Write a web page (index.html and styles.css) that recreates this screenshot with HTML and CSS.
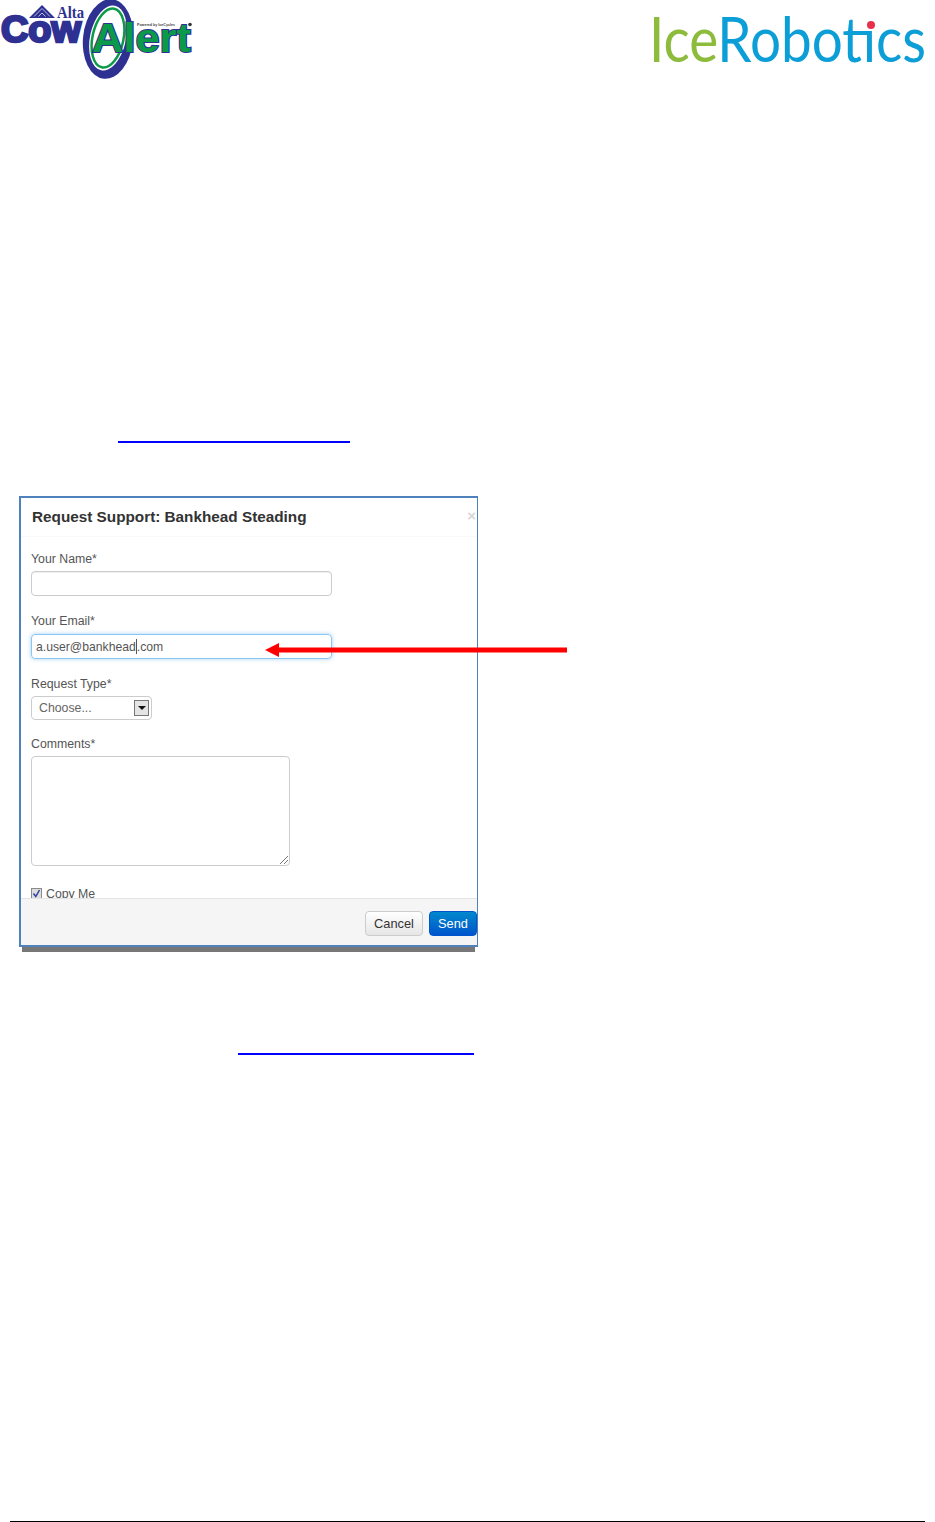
FILE: index.html
```html
<!DOCTYPE html>
<html lang="en">
<head>
    <meta charset="UTF-8">
    <meta name="viewport" content="width=device-width, initial-scale=1.0">
    <title>Request Support</title>
    <link rel="stylesheet" href="styles.css">
</head>
<body>
    <header class="page-header">
        <svg class="logo-cow" viewBox="0 0 200 85" width="200" height="85">
            <path class="alta-roof" d="M29 18 L42 5 L55 18 Z"/>
            <path class="alta-hatch" d="M34 16.5 L42 8.5 L50 16.5 M38.5 16.5 L42 13 L45.5 16.5"/>
            <text class="alta-text" x="57" y="17.5" textLength="27" lengthAdjust="spacingAndGlyphs">Alta</text>
            <text class="cow-text" x="1" y="42" textLength="80" lengthAdjust="spacingAndGlyphs">Cow</text>
            <ellipse class="ring-blue" cx="108" cy="39" rx="25" ry="40" transform="rotate(6 108 39)"/>
            <ellipse class="ring-white" cx="108" cy="38" rx="18" ry="33" transform="rotate(12 108 38)"/>
            <ellipse class="ring-green" cx="108" cy="38" rx="15.5" ry="30" transform="rotate(12 108 38)"/>
            <text class="alert-text" x="92" y="52" textLength="99" lengthAdjust="spacingAndGlyphs">Alert</text>
            <text class="powered-text" x="137" y="25.5" textLength="38" lengthAdjust="spacingAndGlyphs">Powered by IceCycles</text>
            <circle class="reg-dot" cx="190" cy="24.5" r="1.8"/>
        </svg>
        <svg class="logo-ice" viewBox="0 0 284 60" width="284" height="60">
            <text class="ice-text" x="4" y="53" textLength="277" lengthAdjust="spacingAndGlyphs"><tspan class="ice-green">Ice</tspan><tspan class="ice-blue">Robotics</tspan></text>
            <!-- the i gets a red dot instead of the font's own -->
            <rect class="ice-mask" x="219.5" y="2" width="12" height="19"/>
            <circle class="ice-dot" cx="226" cy="16" r="4"/>
        </svg>
    </header>

    <div class="doc-link doc-link-first"></div>

    <div class="shot">
        <div class="dialog">
            <div class="dialog-title">
                <h3>Request Support: Bankhead Steading</h3>
                <span class="close">×</span>
            </div>
            <div class="dialog-body">
                <label class="field-label">Your Name*</label>
                <div class="input"></div>
                <label class="field-label">Your Email*</label>
                <div class="input input-focus">a.user@bankhead<span class="caret"></span>.com</div>
                <label class="field-label">Request Type*</label>
                <div class="select">
                    <span>Choose...</span>
                    <span class="select-btn"></span>
                </div>
                <label class="field-label">Comments*</label>
                <div class="textarea">
                    <svg class="grip" viewBox="0 0 8 8" width="8" height="8"><path d="M0 8 L8 0 M4 8 L8 4" /></svg>
                </div>
                <div class="copy-row">
                    <span class="checkbox">
                        <svg viewBox="0 0 11 11" width="11" height="11"><path d="M2.5 5.5 L4.8 8.5 L8.5 2"/></svg>
                    </span>
                    <span class="copy-text">Copy Me</span>
                </div>
            </div>
            <div class="dialog-footer">
                <button class="btn">Cancel</button>
                <button class="btn btn-send">Send</button>
            </div>
        </div>
        <div class="dialog-shadow"></div>
        <svg class="arrow" viewBox="0 0 302 14" width="302" height="14">
            <path d="M0 7 L14 0 V4.5 H302 V9.5 H14 V14 Z"/>
        </svg>
    </div>

    <div class="doc-link doc-link-second"></div>

    <div class="page-footer"></div>
</body>
</html>
```

FILE: styles.css
```css
body {
    margin: 0;
    background-color: white;
    font-family: "Liberation Sans", Arial, sans-serif;
    color: #555;
}

/* header logos */
.page-header {
    display: flex;
    justify-content: space-between;
    height: 85px;
}
.logo-ice {
    margin: 9px 6px 0 0;
}
.alta-roof {
    fill: #2e3192;
}
.alta-hatch {
    fill: none;
    stroke: #b9bbe0;
    stroke-width: 1px;
}
.alta-text {
    font-family: "Liberation Serif", serif;
    font-weight: bold;
    font-size: 17px;
    fill: #2e3192;
}
.cow-text {
    font-family: "Liberation Sans", sans-serif;
    font-weight: bold;
    font-size: 36px;
    fill: #2e3192;
    stroke: #2e3192;
    stroke-width: 2.5px;
}
.ring-blue {
    fill: #2e3192;
}
.ring-white {
    fill: white;
}
.ring-green {
    fill: white;
    stroke: #0a9a48;
    stroke-width: 2.5px;
}
.alert-text {
    font-family: "Liberation Sans", sans-serif;
    font-weight: bold;
    font-size: 40px;
    fill: #0a9a48;
    stroke: #2e3192;
    stroke-width: 2px;
    paint-order: stroke;
}
.powered-text {
    font-family: "Liberation Sans", sans-serif;
    font-weight: bold;
    font-size: 4px;
    fill: #444;
}
.reg-dot {
    fill: #333;
}
.ice-text {
    font-family: Lato, "Open Sans", sans-serif;
    font-weight: 400;
    font-size: 62px;
}
.ice-green {
    fill: #8dbb3c;
}
.ice-blue {
    fill: #0c9ed6;
}
.ice-mask {
    fill: white;
}
.ice-dot {
    fill: #e8304a;
}

/* blanked out links, only the underline shows */
.doc-link {
    height: 2px;
    background-color: #0000ff;
}
.doc-link-first {
    width: 232px;
    margin: 356px 0 0 118px;
}
.doc-link-second {
    width: 236px;
    margin: 101px 0 0 238px;
}

/* dialog screenshot */
.shot {
    position: relative;
    width: 460px;
    margin: 53px 0 0 19px;
}
.dialog {
    box-sizing: border-box;
    width: 459px;
    height: 451px;
    border: 2px solid #4f81bd;
    border-right-width: 1px;
    display: flex;
    flex-direction: column;
    font-size: 12.3px;
}
.dialog-title {
    box-sizing: border-box;
    flex: none;
    height: 39px;
    padding-left: 11px;
    display: flex;
    justify-content: space-between;
    align-items: center;
    border-bottom: 1px solid #f8f8f8;
}
.dialog-title h3 {
    margin: 0;
    font-size: 15.3px;
    font-weight: bold;
    color: #333;
}
.close {
    margin: 0 1px 4px 0;
    font-size: 15px;
    font-weight: bold;
    color: #d8d8d8;
}
.dialog-body {
    flex: 1;
    min-height: 0;
    overflow: hidden;
    padding: 13px 0 0 10px;
}
.field-label {
    display: block;
    height: 18px;
    line-height: 18px;
    margin-bottom: 3px;
}
.input {
    box-sizing: border-box;
    width: 301px;
    height: 25px;
    margin-bottom: 16px;
    padding-left: 4px;
    line-height: 24px;
    border: 1px solid #ccc;
    border-radius: 4px;
    box-shadow: inset 0 1px 1px rgba(0, 0, 0, 0.07);
}
.input-focus {
    margin-top: 4px;
    font-size: 12.2px;
    border-color: #8cc4f2;
    box-shadow: 0 0 4px rgba(82, 168, 236, 0.5);
}
.caret {
    display: inline-block;
    height: 15px;
    margin: 0 0 -3px 0;
    border-left: 1px solid #555;
    width: 0;
}
.select {
    box-sizing: border-box;
    width: 121px;
    height: 24px;
    margin: 3px 0 15px;
    padding: 0 2px 0 7px;
    display: flex;
    justify-content: space-between;
    align-items: center;
    color: #666;
    border: 1px solid #ccc;
    border-radius: 4px;
}
.select-btn {
    box-sizing: border-box;
    position: relative;
    width: 15px;
    height: 16px;
    border: 1px solid #777;
    background-color: #e4e4e4;
}
.select-btn::after {
    content: "";
    position: absolute;
    left: 3px;
    top: 5px;
    border: 4px solid transparent;
    border-top-color: #111;
    border-bottom-width: 0;
}
.textarea {
    box-sizing: border-box;
    position: relative;
    width: 259px;
    height: 110px;
    border: 1px solid #ccc;
    border-radius: 4px;
}
.grip {
    position: absolute;
    right: 1px;
    bottom: 1px;
    stroke: #777;
    stroke-width: 1px;
}
.copy-row {
    display: flex;
    align-items: flex-start;
    gap: 4px;
    margin-top: 22px;
    line-height: 13px;
}
.copy-text {
    margin-top: -1px;
    padding-top: 1px;
}
.checkbox {
    box-sizing: border-box;
    width: 11px;
    height: 11px;
    display: flex;
    border: 1px solid #8a8a8a;
    background-color: #ddd;
}
.checkbox svg {
    flex: none;
    margin: -1px;
    fill: none;
    stroke: #2b3f9e;
    stroke-width: 1.5px;
}
.dialog-footer {
    box-sizing: border-box;
    flex: none;
    height: 47px;
    padding-top: 12px;
    display: flex;
    justify-content: flex-end;
    align-items: flex-start;
    gap: 6px;
    background-color: #f5f5f5;
    border-top: 1px solid #e5e5e5;
}
.btn {
    box-sizing: border-box;
    height: 25px;
    width: 58px;
    padding: 0;
    font-family: inherit;
    font-size: 12.8px;
    color: #333;
    background: linear-gradient(#ffffff, #e6e6e6);
    border: 1px solid #ccc;
    border-radius: 4px;
}
.btn-send {
    width: 48px;
    color: white;
    background: linear-gradient(#0088cc, #0055cc);
    border-color: #0055cc;
}
.dialog-shadow {
    height: 5px;
    margin: 0 4px 0 3px;
    background-color: #777;
}
.arrow {
    position: absolute;
    left: 246px;
    top: 147px;
    fill: #ff0000;
}

.page-footer {
    height: 1px;
    margin: 466px 10px 0;
    background-color: black;
}
```
